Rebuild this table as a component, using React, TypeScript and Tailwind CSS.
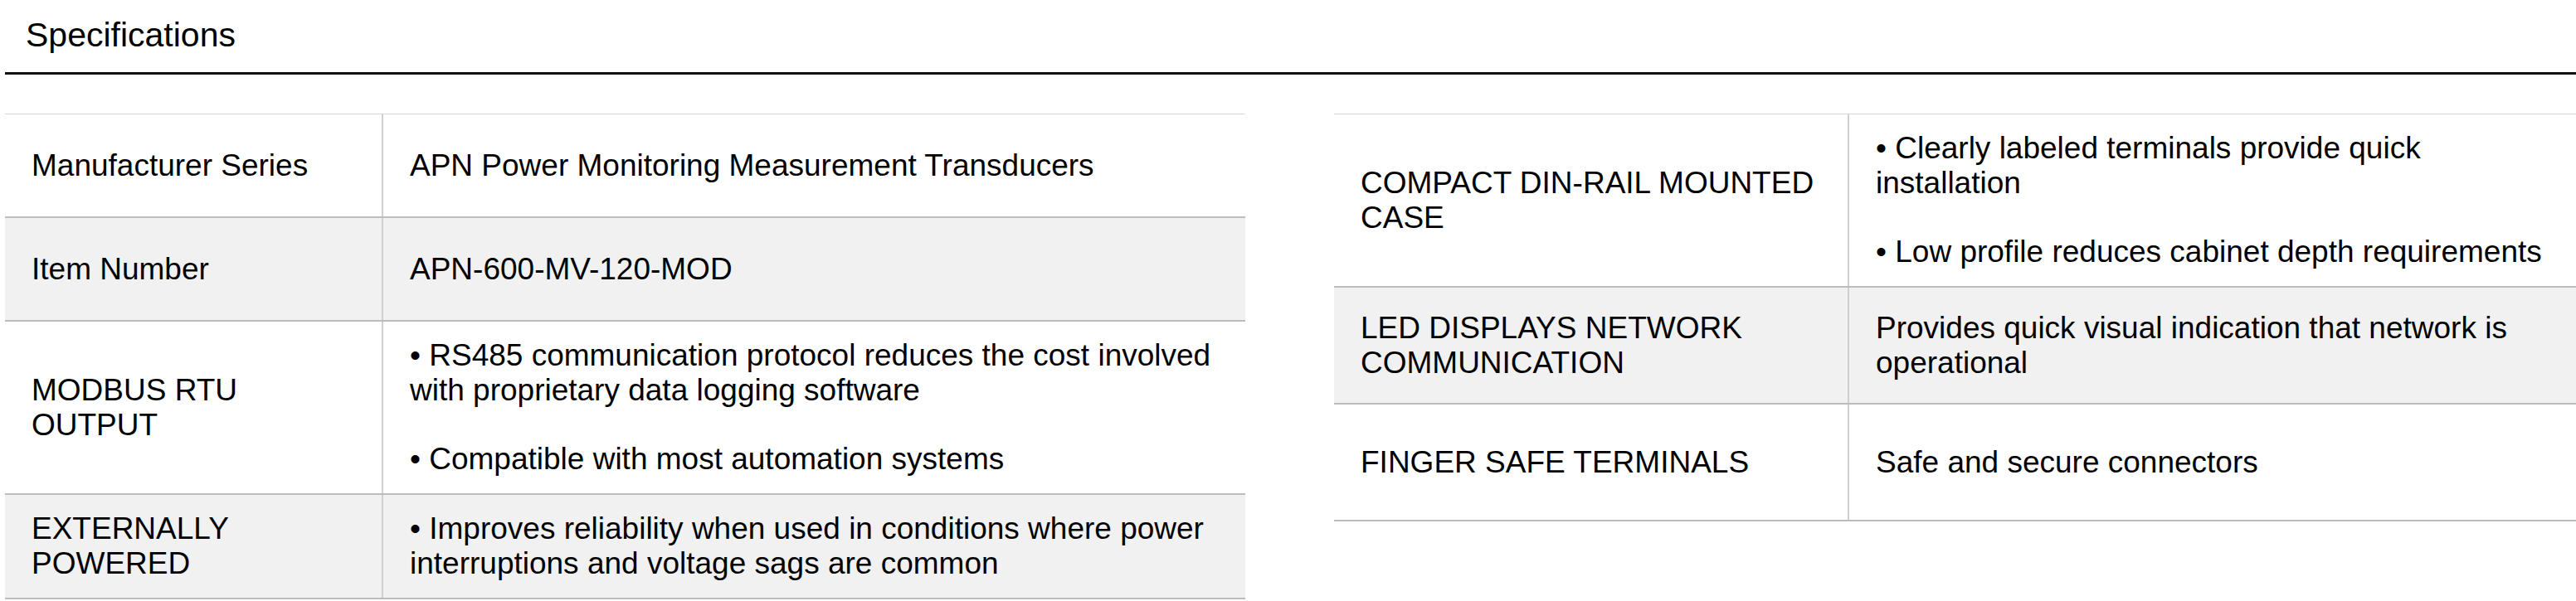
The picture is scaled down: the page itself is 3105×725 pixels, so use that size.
type Spec = { label: string; value: string[] };

const leftSpecs: Spec[] = [
  { label: "Manufacturer Series", value: ["APN Power Monitoring Measurement Transducers"] },
  { label: "Item Number", value: ["APN-600-MV-120-MOD"] },
  {
    label: "MODBUS RTU OUTPUT",
    value: [
      "• RS485 communication protocol reduces the cost involved with proprietary data logging software",
      "• Compatible with most automation systems",
    ],
  },
  {
    label: "EXTERNALLY POWERED",
    value: ["• Improves reliability when used in conditions where power interruptions and voltage sags are common"],
  },
];

const rightSpecs: Spec[] = [
  {
    label: "COMPACT DIN-RAIL MOUNTED CASE",
    value: ["• Clearly labeled terminals provide quick installation", "• Low profile reduces cabinet depth requirements"],
  },
  { label: "LED DISPLAYS NETWORK COMMUNICATION", value: ["Provides quick visual indication that network is operational"] },
  { label: "FINGER SAFE TERMINALS", value: ["Safe and secure connectors"] },
];

function SpecTable({ rows, labelWidth, minRow }: { rows: Spec[]; labelWidth: string; minRow: string }) {
  return (
    <div className="border-t border-[#d4d4d4]">
      {rows.map((row, i) => (
        <div
          key={row.label}
          className={`flex border-b-2 border-[#bcbcbc] ${minRow} ${i % 2 === 1 ? "bg-[#f1f1f1]" : "bg-white"}`}
        >
          <div className={`${labelWidth} shrink-0 flex items-center px-8 py-5 border-r-2 border-[#cfcfcf]`}>
            {row.label}
          </div>
          <div className="flex-1 flex flex-col justify-center px-8 py-5">
            {row.value.map((v, j) => (
              <p key={j} className={j > 0 ? "mt-[41px]" : ""}>
                {v}
              </p>
            ))}
          </div>
        </div>
      ))}
    </div>
  );
}

export default function App() {
  return (
    <div className="w-[3105px] h-[725px] overflow-hidden bg-white pl-[6px] text-black font-['Liberation_Sans',Arial,sans-serif]">
      {/* Title */}
      <div className="pl-[25px] pt-[19px] pb-[21px] border-b-[3px] border-[#111]">
        <h2 className="text-[41px] leading-[47px] font-normal">Specifications</h2>
      </div>

      {/* Tables */}
      <div className="mt-[47px] flex items-start text-[37px] leading-[42px]">
        <div className="w-[1495px] shrink-0">
          <SpecTable rows={leftSpecs} labelWidth="w-[456px]" minRow="min-h-[125px]" />
        </div>
        <div className="ml-[107px] flex-1">
          <SpecTable rows={rightSpecs} labelWidth="w-[621px]" minRow="min-h-[141px]" />
        </div>
      </div>
    </div>
  );
}
